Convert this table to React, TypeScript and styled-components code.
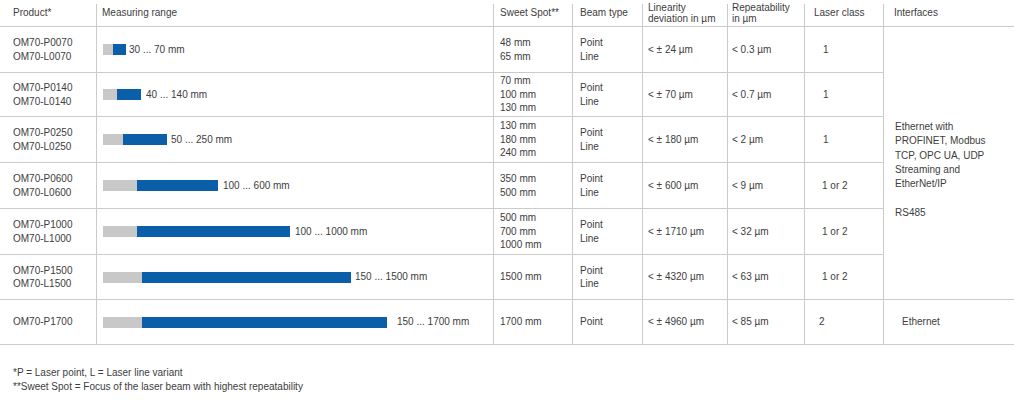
import React from "react";
import styled, { createGlobalStyle } from "styled-components";

const GlobalStyle = createGlobalStyle`
	body {
		margin: 0;
		background: #ffffff;
	}
`;

const LINE = "#cbcbcb";

const Page = styled.div`
	width: 1020px;
	height: 404px;
	font-family: "Liberation Sans", Arial, sans-serif;
	font-size: 10px;
	color: #3d3d3d;
	background: #ffffff;
`;

const Table = styled.table`
	width: 1014px;
	table-layout: fixed;
	border-collapse: separate;
	border-spacing: 0;
`;

const HeadCell = styled.th<{ $w: number; $pl: number; $first?: boolean }>`
	width: ${(p) => p.$w}px;
	box-sizing: border-box;
	height: 27px;
	padding: 0 4px 1px ${(p) => p.$pl}px;
	text-align: left;
	font-weight: normal;
	line-height: 11px;
	vertical-align: middle;
	border-bottom: 1px solid ${LINE};
	background: ${(p) =>
		p.$first
			? "none"
			: `linear-gradient(${LINE}, ${LINE}) left 4px / 1px 100% no-repeat`};
`;

const Row = styled.tr<{ $h: number }>`
	height: ${(p) => p.$h}px;
`;

const Cell = styled.td<{ $pl: number; $first?: boolean }>`
	box-sizing: border-box;
	padding: 0 4px 0 ${(p) => p.$pl}px;
	vertical-align: middle;
	line-height: 13.5px;
	white-space: nowrap;
	border-bottom: 1px solid ${LINE};
	border-left: ${(p) => (p.$first ? "none" : `1px solid ${LINE}`)};
`;

const InterfaceCell = styled(Cell)`
	vertical-align: top;
	padding-top: 93px;
	line-height: 14.3px;
`;

const Lines = styled.div`
	display: flex;
	flex-direction: column;
`;

const Range = styled.div`
	display: flex;
	align-items: center;
`;

const Track = styled.span<{ $w: number }>`
	width: ${(p) => p.$w}px;
	height: 11px;
	background: #c8c8c8;
	flex: none;
`;

const Fill = styled.span<{ $w: number }>`
	width: ${(p) => p.$w}px;
	height: 11px;
	background: #0b5fa8;
	flex: none;
`;

const RangeLabel = styled.span<{ $gap: number }>`
	margin-left: ${(p) => p.$gap}px;
`;

const Notes = styled.div`
	margin-top: 21px;
	padding-left: 13px;
	line-height: 13.5px;
`;

type Product = {
	names: string[];
	gray: number;
	blue: number;
	range: string;
	gap: number;
	sweet: string[];
	beam: string[];
	linearity: string;
	repeat: string;
	laser: string;
	laserIndent: number;
	h: number;
};

const products: Product[] = [
	{
		names: ["OM70-P0070", "OM70-L0070"],
		gray: 10,
		blue: 13,
		range: "30 ... 70 mm",
		gap: 3,
		sweet: ["48 mm", "65 mm"],
		beam: ["Point", "Line"],
		linearity: "< ± 24 µm",
		repeat: "< 0.3 µm",
		laser: "1",
		laserIndent: 18,
		h: 46,
	},
	{
		names: ["OM70-P0140", "OM70-L0140"],
		gray: 14,
		blue: 24,
		range: "40 ... 140 mm",
		gap: 5,
		sweet: ["70 mm", "100 mm", "130 mm"],
		beam: ["Point", "Line"],
		linearity: "< ± 70 µm",
		repeat: "< 0.7 µm",
		laser: "1",
		laserIndent: 18,
		h: 44,
	},
	{
		names: ["OM70-P0250", "OM70-L0250"],
		gray: 20,
		blue: 44,
		range: "50 ... 250 mm",
		gap: 4,
		sweet: ["130 mm", "180 mm", "240 mm"],
		beam: ["Point", "Line"],
		linearity: "< ± 180 µm",
		repeat: "< 2 µm",
		laser: "1",
		laserIndent: 18,
		h: 46,
	},
	{
		names: ["OM70-P0600", "OM70-L0600"],
		gray: 34,
		blue: 81,
		range: "100 ... 600 mm",
		gap: 5,
		sweet: ["350 mm", "500 mm"],
		beam: ["Point", "Line"],
		linearity: "< ± 600 µm",
		repeat: "< 9 µm",
		laser: "1 or 2",
		laserIndent: 17,
		h: 46,
	},
	{
		names: ["OM70-P1000", "OM70-L1000"],
		gray: 34,
		blue: 153,
		range: "100 ... 1000 mm",
		gap: 5,
		sweet: ["500 mm", "700 mm", "1000 mm"],
		beam: ["Point", "Line"],
		linearity: "< ± 1710 µm",
		repeat: "< 32 µm",
		laser: "1 or 2",
		laserIndent: 17,
		h: 46,
	},
	{
		names: ["OM70-P1500", "OM70-L1500"],
		gray: 39,
		blue: 209,
		range: "150 ... 1500 mm",
		gap: 4,
		sweet: ["1500 mm"],
		beam: ["Point", "Line"],
		linearity: "< ± 4320 µm",
		repeat: "< 63 µm",
		laser: "1 or 2",
		laserIndent: 17,
		h: 45,
	},
	{
		names: ["OM70-P1700"],
		gray: 39,
		blue: 245,
		range: "150 ... 1700 mm",
		gap: 10,
		sweet: ["1700 mm"],
		beam: ["Point"],
		linearity: "< ± 4960 µm",
		repeat: "< 85 µm",
		laser: "2",
		laserIndent: 14,
		h: 45,
	},
];

const headers = [
	{ label: ["Product*"], w: 96, pl: 13 },
	{ label: ["Measuring range"], w: 397, pl: 6 },
	{ label: ["Sweet Spot**"], w: 79, pl: 7 },
	{ label: ["Beam type"], w: 70, pl: 8 },
	{ label: ["Linearity", "deviation in µm"], w: 85, pl: 6 },
	{ label: ["Repeatability", "in µm"], w: 77, pl: 5 },
	{ label: ["Laser class"], w: 79, pl: 10 },
	{ label: ["Interfaces"], w: 131, pl: 11 },
];

const Stack = ({ items }: { items: string[] }) => (
	<Lines>
		{items.map((t) => (
			<span key={t}>{t}</span>
		))}
	</Lines>
);

export default function App() {
	return (
		<Page>
			<GlobalStyle />
			<Table>
				<thead>
					<tr>
						{headers.map((h, i) => (
							<HeadCell key={h.label[0]} $w={h.w} $pl={h.pl} $first={i === 0}>
								<Stack items={h.label} />
							</HeadCell>
						))}
					</tr>
				</thead>
				<tbody>
					{products.map((p, i) => (
						<Row key={p.names[0]} $h={p.h}>
							<Cell $pl={13} $first>
								<Stack items={p.names} />
							</Cell>
							<Cell $pl={6}>
								<Range>
									<Track $w={p.gray} />
									<Fill $w={p.blue} />
									<RangeLabel $gap={p.gap}>{p.range}</RangeLabel>
								</Range>
							</Cell>
							<Cell $pl={6}>
								<Stack items={p.sweet} />
							</Cell>
							<Cell $pl={7}>
								<Stack items={p.beam} />
							</Cell>
							<Cell $pl={5}>{p.linearity}</Cell>
							<Cell $pl={4}>{p.repeat}</Cell>
							<Cell $pl={p.laserIndent}>{p.laser}</Cell>
							{i === 0 && (
								<InterfaceCell $pl={11} rowSpan={6}>
									<Stack
										items={[
											"Ethernet with",
											"PROFINET, Modbus",
											"TCP, OPC UA, UDP",
											"Streaming and",
											"EtherNet/IP",
										]}
									/>
									<br />
									RS485
								</InterfaceCell>
							)}
							{i === 6 && <Cell $pl={18}>Ethernet</Cell>}
						</Row>
					))}
				</tbody>
			</Table>
			<Notes>
				<div>*P = Laser point, L = Laser line variant</div>
				<div>**Sweet Spot = Focus of the laser beam with highest repeatability</div>
			</Notes>
		</Page>
	);
}
